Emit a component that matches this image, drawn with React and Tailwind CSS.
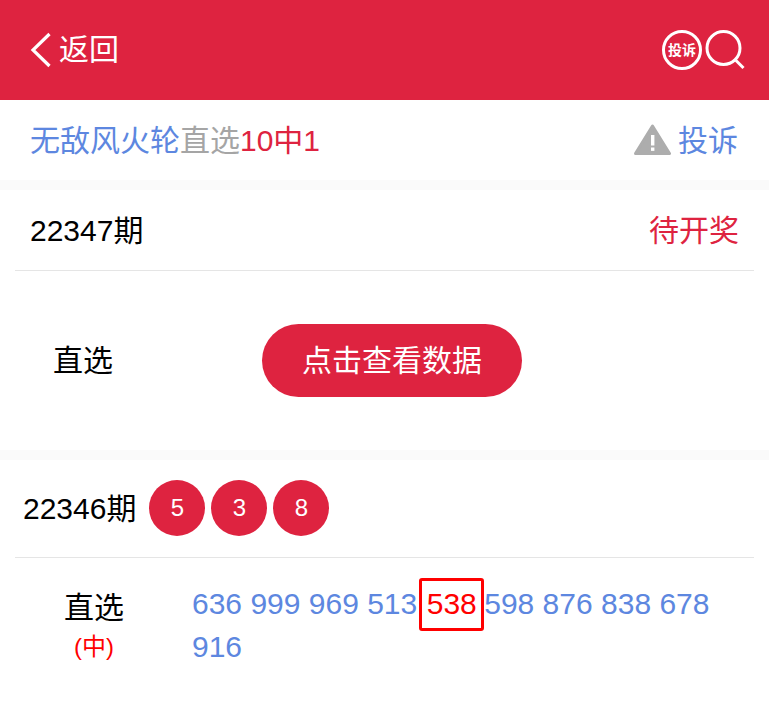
export default function App() {
  const nums = ["636", "999", "969", "513"];
  const rest = ["598", "876", "838", "678"];
  return (
    <div className="w-[769px] h-[705px] overflow-hidden bg-white font-['Liberation_Sans','Noto_Sans_CJK_SC',sans-serif]">
      <header className="h-[100px] bg-[#de2340] flex items-center justify-between pl-[30px] pr-[24px] text-white">
        <div className="flex items-center">
          <svg width="22" height="36" viewBox="0 0 22 36" fill="none" stroke="white" strokeWidth="3.2" className="mr-[7px]">
            <path d="M19.5 2 L3 18 L19.5 34" />
          </svg>
          <span className="text-[30px] leading-[40px]">返回</span>
        </div>
        <div className="flex items-center gap-[3px]">
          <div className="w-[40px] h-[40px] rounded-full border-[3px] border-white flex items-center justify-center text-[14px] font-bold whitespace-nowrap">投诉</div>
          <svg width="40" height="40" viewBox="0 0 40 40" fill="none" stroke="white" strokeWidth="3">
            <circle cx="18.5" cy="18" r="16.5" />
            <path d="M30.5 30 L38.5 38" />
          </svg>
        </div>
      </header>

      <div className="h-[80px] flex items-center justify-between pl-[30px] pr-[31px] text-[30px]">
        <div>
          <span className="text-[#5d87e0]">无敌风火轮</span>
          <span className="text-[#a5a5a5]">直选</span>
          <span className="text-[#de2340]">10中1</span>
        </div>
        <div className="flex items-center gap-[7px]">
          <svg width="37" height="32" viewBox="0 0 37 32">
            <path d="M18.5 2 L35.5 29.5 H1.5 Z" fill="#adadad" stroke="#adadad" strokeWidth="3" strokeLinejoin="round" />
            <rect x="17" y="11" width="3.4" height="10.5" fill="white" />
            <rect x="17" y="23.5" width="3.4" height="3.4" fill="white" />
          </svg>
          <span className="text-[#5d87e0]">投诉</span>
        </div>
      </div>

      <div className="h-[10px] bg-[#fafafa]" />

      <div className="mx-[15px] h-[81px] flex items-center justify-between border-b border-[#e5e5e5] pl-[15px] pr-[15px] text-[30px]">
        <span className="text-black">22347期</span>
        <span className="text-[#de2340]">待开奖</span>
      </div>

      <div className="h-[179px] flex items-center pl-[53px] pb-[1px]">
        <span className="w-[209px] text-[30px] text-black">直选</span>
        <button className="w-[260px] h-[73px] rounded-full bg-[#de2340] text-white text-[30px]">点击查看数据</button>
      </div>

      <div className="h-[10px] bg-[#fafafa]" />

      <div className="mx-[15px] h-[98px] flex items-center border-b border-[#e5e5e5] pl-[8px] pb-[1px]">
        <span className="text-[30px] text-black mr-[13px]">22346期</span>
        <div className="flex gap-[6px]">
          {["5", "3", "8"].map((n, i) => (
            <span key={i} className="w-[56px] h-[56px] rounded-full bg-[#de2340] text-white text-[24px] flex items-center justify-center">{n}</span>
          ))}
        </div>
      </div>

      <div className="flex mx-[15px] pt-[20px]">
        <div className="w-[158px] flex flex-col items-center pt-[8px] shrink-0">
          <span className="text-[30px] leading-[44px] text-black">直选</span>
          <span className="text-[24px] leading-[34px] text-[#ff0000]">(中)</span>
        </div>
        <div className="w-[540px] ml-[19px] text-[30px] leading-[46px] text-[#5d87e0]">
          <div className="flex items-center h-[52px]">
            <span className="whitespace-pre">{nums.join(" ")}</span>
            <span className="w-[65px] h-[53px] ml-[2px] border-[3px] border-[#ff0000] rounded-[3px] text-[#ff0000] flex items-center justify-center">538</span>
            <span className="whitespace-pre">{rest.join(" ")}</span>
          </div>
          <div className="mt-[-6px] pt-[0px] leading-[46px]">916</div>
        </div>
      </div>
    </div>
  );
}
